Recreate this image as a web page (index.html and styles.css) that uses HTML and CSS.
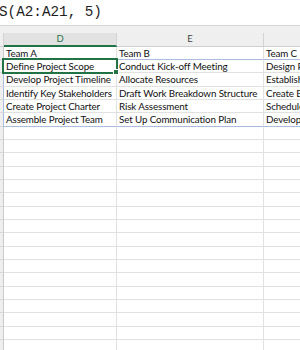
FILE: index.html
```html
<!DOCTYPE html>
<html>
<head>
<meta charset="utf-8">
<link rel="stylesheet" href="styles.css">
</head>
<body>
<div class="formula">S(A2:A21, 5)</div>
<div class="gap"></div>
<div class="sheet">
  <div class="hdr corner"></div>
  <div class="hdr col sel">D</div>
  <div class="hdr col">E</div>
  <div class="hdr col last"></div>

  <div class="rh"></div><div class="c">Team A</div><div class="c">Team B</div><div class="c last">Team C</div>
  <div class="rh"></div><div class="c b-top b-left active">Define Project Scope<span class="handle"></span></div><div class="c b-top">Conduct Kick-off Meeting</div><div class="c b-top last">Design Plan</div>
  <div class="rh"></div><div class="c b-left">Develop Project Timeline</div><div class="c">Allocate Resources</div><div class="c last">Establish</div>
  <div class="rh"></div><div class="c b-left">Identify Key Stakeholders</div><div class="c">Draft Work Breakdown Structure</div><div class="c last">Create B</div>
  <div class="rh"></div><div class="c b-left">Create Project Charter</div><div class="c">Risk Assessment</div><div class="c last">Schedule</div>
  <div class="rh"></div><div class="c b-left b-bot">Assemble Project Team</div><div class="c b-bot">Set Up Communication Plan</div><div class="c b-bot last">Develop</div>

  <div class="rh"></div><div class="c"></div><div class="c"></div><div class="c last"></div>
  <div class="rh"></div><div class="c"></div><div class="c"></div><div class="c last"></div>
  <div class="rh"></div><div class="c"></div><div class="c"></div><div class="c last"></div>
  <div class="rh"></div><div class="c"></div><div class="c"></div><div class="c last"></div>
  <div class="rh"></div><div class="c"></div><div class="c"></div><div class="c last"></div>
  <div class="rh"></div><div class="c"></div><div class="c"></div><div class="c last"></div>
  <div class="rh"></div><div class="c"></div><div class="c"></div><div class="c last"></div>
  <div class="rh"></div><div class="c"></div><div class="c"></div><div class="c last"></div>
  <div class="rh"></div><div class="c"></div><div class="c"></div><div class="c last"></div>
  <div class="rh"></div><div class="c"></div><div class="c"></div><div class="c last"></div>
  <div class="rh"></div><div class="c"></div><div class="c"></div><div class="c last"></div>
  <div class="rh"></div><div class="c"></div><div class="c"></div><div class="c last"></div>
  <div class="rh"></div><div class="c"></div><div class="c"></div><div class="c last"></div>
  <div class="rh"></div><div class="c"></div><div class="c"></div><div class="c last"></div>
  <div class="rh"></div><div class="c"></div><div class="c"></div><div class="c last"></div>
  <div class="rh"></div><div class="c"></div><div class="c"></div><div class="c last"></div>
  <div class="rh"></div><div class="c"></div><div class="c"></div><div class="c last"></div>
</div>
</body>
</html>
```
FILE: styles.css
```css
html, body {
  margin: 0;
  padding: 0;
  width: 300px;
  height: 350px;
  overflow: hidden;
  background: #ffffff;
}
.formula {
  height: 25px;
  border-bottom: 1px solid #d6d6d6;
  background: #ffffff;
  font-family: "Liberation Mono", monospace;
  font-size: 14.3px;
  line-height: 25px;
  white-space: nowrap;
  color: #1e1e1e;
  margin-left: -1px;
}
.gap {
  height: 7.33px;
  background: #f0f0f0;
}
.sheet {
  display: grid;
  grid-template-columns: 4px 113px 147px 1fr;
  grid-auto-rows: 13.333px;
  font-family: Lato, "Liberation Sans", sans-serif;
  font-size: 9.8px;
  letter-spacing: -0.12px;
  color: #111111;
}
.hdr {
  background: #efefef;
  border-right: 1px solid #d4d4d4;
  border-bottom: 1px solid #cfcfcf;
  box-sizing: border-box;
  text-align: center;
  font-size: 9.5px;
  line-height: 12px;
  color: #444444;
}
.hdr.sel {
  background: #e2e2e2;
  color: #217346;
  border-bottom: 2px solid #217346;
}
.rh {
  background: #efefef;
  border-right: 1px solid #c9c9c9;
  border-bottom: 1px solid #d9d9d9;
  box-sizing: border-box;
}
.c {
  position: relative;
  box-sizing: border-box;
  border-right: 1px solid #e1e1e1;
  border-bottom: 1px solid #e1e1e1;
  padding-left: 2px;
  line-height: 13px;
  white-space: nowrap;
  overflow: hidden;
}
.last { border-right: none; }
.b-top { border-top: 1px solid #a9bedf; margin-top: -1px; }
.b-left { border-left: 1px solid #a9bedf; margin-left: -1px; }
.b-bot { border-bottom: 1px solid #a9bedf; }
.active {
  outline: 2px solid #217346;
  outline-offset: -1px;
  overflow: visible;
  z-index: 2;
}
.handle {
  position: absolute;
  right: -3px;
  bottom: -3px;
  width: 4px;
  height: 4px;
  background: #217346;
  border: 1px solid #ffffff;
}
```
